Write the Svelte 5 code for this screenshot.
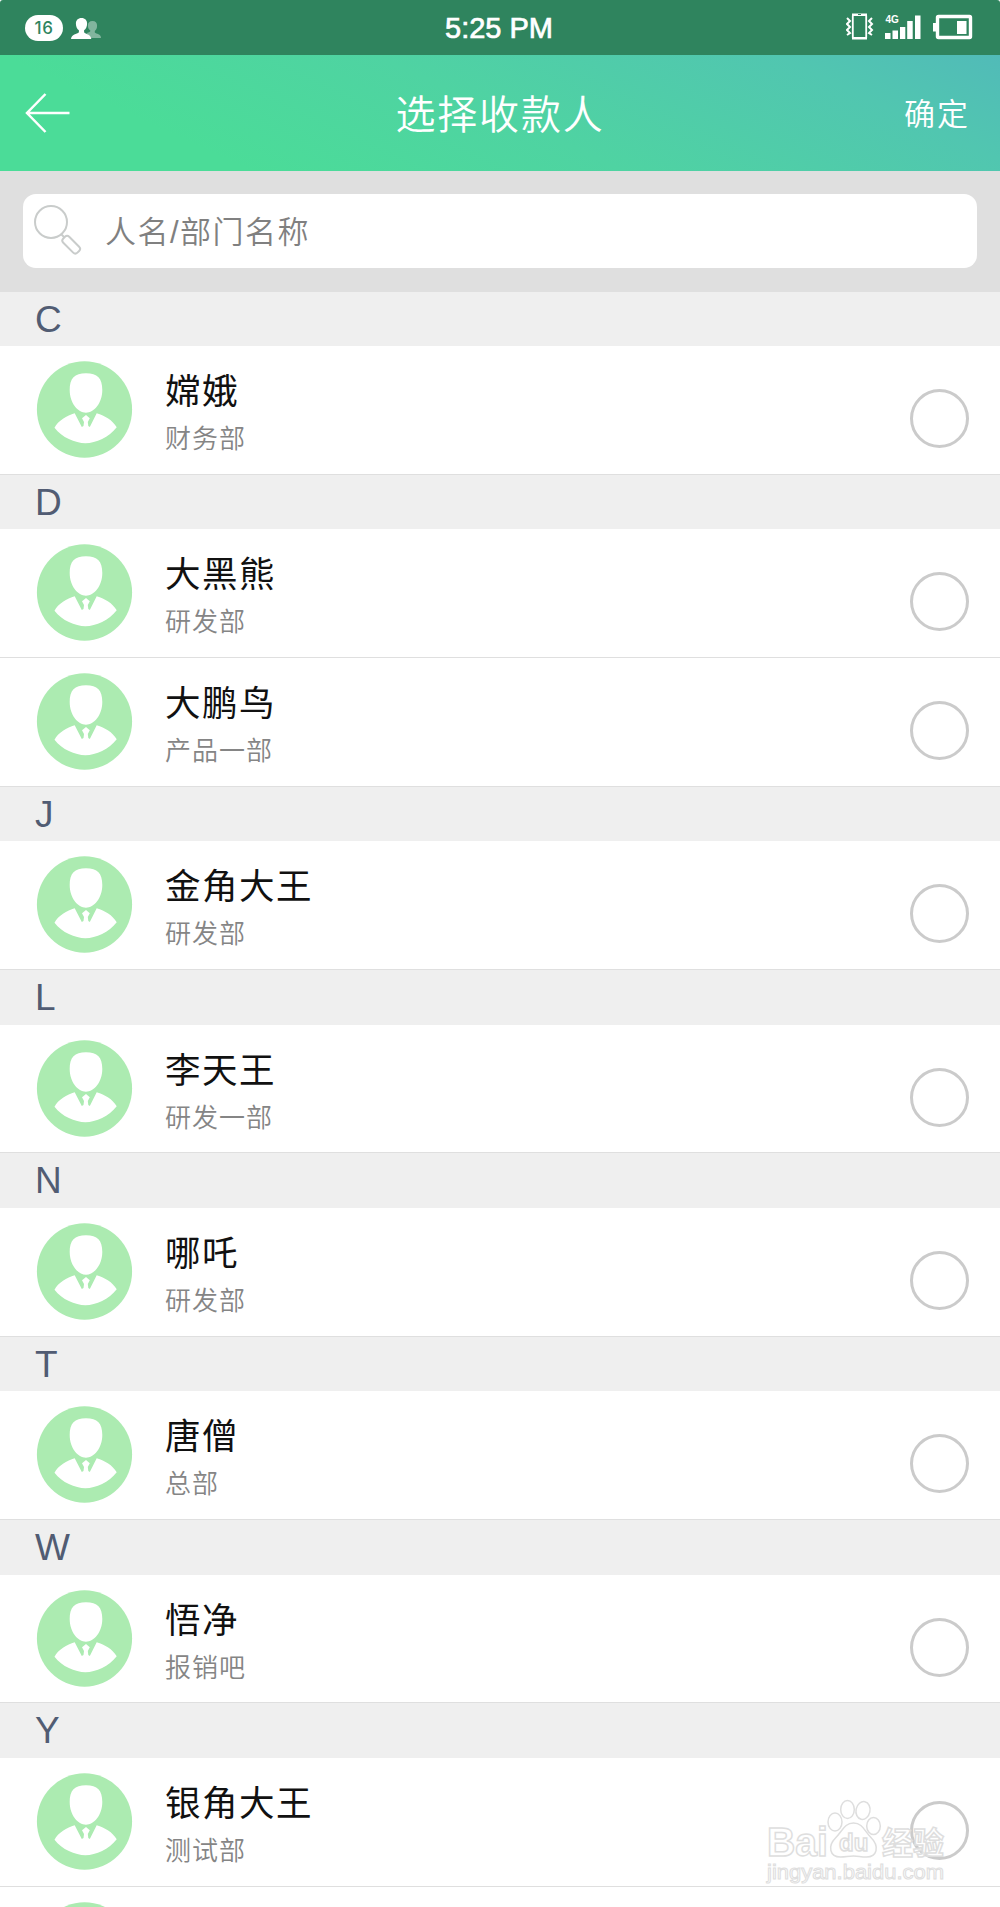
<script>
  const sections = [
    { letter: 'C', people: [{ name: '嫦娥', dept: '财务部' }] },
    {
      letter: 'D',
      people: [
        { name: '大黑熊', dept: '研发部' },
        { name: '大鹏鸟', dept: '产品一部' }
      ]
    },
    { letter: 'J', people: [{ name: '金角大王', dept: '研发部' }] },
    { letter: 'L', people: [{ name: '李天王', dept: '研发一部' }] },
    { letter: 'N', people: [{ name: '哪吒', dept: '研发部' }] },
    { letter: 'T', people: [{ name: '唐僧', dept: '总部' }] },
    { letter: 'W', people: [{ name: '悟净', dept: '报销吧' }] },
    { letter: 'Y', people: [{ name: '银角大王', dept: '测试部' }, { name: '', dept: '' }] }
  ];
</script>

<div class="screen">
  <div class="status">
    <div class="side">
      <span class="count">16</span>
      <svg class="contacts" width="31" height="22" viewBox="0 0 31 22">
        <path opacity="0.4" d="M21.500 3c3 0 4.600 2 4.600 4.800c0 2.500-1 4.200-2.300 5.200v1.600c1.500 1.500 6.200 1.400 6.200 5.400H20l-4.500-5c1.800-.6 3.400-1 3.800-1.800v-.8c-1.600-1-2.400-2.700-2.400-5C16.900 4.800 18.500 3 21.500 3z" />
        <path d="M10.500 0c3.600 0 5.600 2.300 5.600 5.700c0 3-1.300 5.300-3 6.500v2C14.500 16.300 20 16 20.300 21H0c.3-5 6-4.700 7.900-6.800v-2c-1.700-1.200-3-3.500-3-6.500C4.900 2.300 6.900 0 10.500 0z" />
      </svg>
    </div>
    <span class="time">5:25 PM</span>
    <svg class="system" width="128" height="30" viewBox="0 0 128 30">
      <g fill="none" stroke="#fff">
        <path stroke-width="2" d="M1 6l3 3-3 3 3 3-3 3 3 3-3 2M26 6l-3 3 3 3-3 3 3 3-3 3 3 2" />
        <path stroke-width="1.800" d="M6.800 3.500V26M20.200 3.500V26" />
        <path stroke-width="2.400" d="M6 2.800h15M6 26.200h15" />
        <rect x="91.500" y="4.500" width="33" height="21" rx="1" stroke-width="3.400" />
      </g>
      <path fill="#2f845e" d="M12 2h3v1h-3z" />
      <path fill="#fff" d="M39 21h5.500v6H39zM46.500 18.500H52V27h-5.500zM54 15h5.300v12H54zM61.200 9h5.500v18h-5.500zM69 3.500h5.500V27H69zM87 11h3v8.500h-3zM111 9h9.500v13H111z" />
      <text x="39.500" y="11" class="net">4G</text>
    </svg>
  </div>

  <header>
    <svg class="back" width="46" height="42" viewBox="0 0 46 42">
      <path d="M44.500 21H2M20.500 2L2 21 20.500 40" fill="none" stroke="#fff" stroke-width="2.500" />
    </svg>
    <h1>选择收款人</h1>
    <span class="confirm">确定</span>
  </header>

  <div class="search">
    <div class="field">
      <svg width="48" height="52" viewBox="0 0 48 52" fill="none" stroke="#c9cccb" stroke-width="2">
        <circle cx="17" cy="17" r="16" />
        <path d="M27.500 29.500l3 3" />
        <rect x="27.200" y="35.500" width="20" height="8.400" rx="3" transform="rotate(45 37.200 39.700)" />
      </svg>
      <span>人名/部门名称</span>
    </div>
  </div>

  <main>
    {#each sections as section}
      <h2>{section.letter}</h2>
      {#each section.people as person}
        <div class="row">
          <svg class="avatar" width="97" height="97" viewBox="0 0 97 97">
            <ellipse cx="48.500" cy="48.500" rx="47.600" ry="48.200" fill="#acebb1" />
            <g fill="#fff">
              <path d="M50 12.300c11.500 0 16.300 5 16.300 16.700C66.300 42 58 51.700 50 51.700S33.700 42 33.700 29c0-11.700 4.800-16.700 16.300-16.700z" />
              <path d="M38.700 52.200C31 54.500 22 59.500 18.500 66.800C26 76.500 39 82.200 49.500 82.200S73 76.500 80.700 66.300C76.500 59 69 54.800 60.700 52.200L53.800 66L52.300 65L51.800 61L53.800 57.300L50 54L46 57.300L48 61L47.500 65L45.800 66z" />
            </g>
          </svg>
          <div class="info">
            <strong>{person.name}</strong>
            <small>{person.dept}</small>
          </div>
          <i class="radio"></i>
        </div>
      {/each}
    {/each}
  </main>

  <svg class="watermark" width="190" height="90" viewBox="0 0 190 90">
    <g fill="#fff" fill-opacity="0.6" stroke="#dedede" stroke-width="1.500">
      <text x="3" y="57" class="brand" textLength="61" lengthAdjust="spacingAndGlyphs">Bai</text>
      <ellipse cx="71" cy="23" rx="7" ry="9" />
      <ellipse cx="83.500" cy="10.500" rx="6.800" ry="9" />
      <ellipse cx="99" cy="11.500" rx="7" ry="9" transform="rotate(12 99 11.500)" />
      <ellipse cx="109.500" cy="27" rx="6.800" ry="8.500" />
      <path d="M89.500 24c9 0 11 8 17 14 10 10 6 20-4 20-6 0-8-1-13-1s-8 1-13 1c-11 0-13-11-5-19 7-7 9-15 18-15z" />
      <text x="75" y="52" class="du">du</text>
      <text x="118" y="55" class="cjk">经验</text>
      <text x="3" y="80" class="url" textLength="177" lengthAdjust="spacingAndGlyphs">jingyan.baidu.com</text>
    </g>
  </svg>
</div>

<style>
  :global(body) {
    background: #fff;
  }
  .screen {
    position: relative;
    width: 1000px;
    height: 1907px;
    overflow: hidden;
    background: #fff;
    font-family: 'Liberation Sans', 'Noto Sans CJK SC', sans-serif;
  }
  .status {
    height: 55.400px;
    box-sizing: border-box;
    padding: 0 27px 0 25px;
    display: grid;
    grid-template-columns: 1fr auto 1fr;
    align-items: center;
    color: #fff;
    background: #2f845e;
    border-radius: 3px 3px 0 0;
  }
  .side {
    display: flex;
    align-items: center;
    gap: 8px;
  }
  .count {
    width: 38px;
    height: 26px;
    border-radius: 13px;
    background: #fff;
    color: #2f845e;
    font: 500 17px/26px Inter, sans-serif;
    letter-spacing: 0.500px;
    text-align: center;
  }
  .contacts {
    fill: #fff;
    margin-top: 2px;
  }
  .time {
    font-size: 29px;
    line-height: 54px;
    padding-top: 1px;
    -webkit-text-stroke: 0.700px #fff;
  }
  .system {
    justify-self: end;
    margin-right: -1px;
    margin-top: -1px;
  }
  .net {
    font: 700 10px 'Liberation Sans', sans-serif;
    fill: #fff;
  }
  header {
    height: 116px;
    box-sizing: border-box;
    padding: 0 30px 0 25px;
    display: grid;
    grid-template-columns: 1fr auto 1fr;
    align-items: center;
    color: #fff;
    background: linear-gradient(25deg, #4bdc98 20%, #4fd3a2 50%, #51c6b0 82%, #51bbb8);
  }
  h1 {
    margin: 0;
    padding: 0 0 3px 5px;
    font-family: 'Noto Sans CJK SC', sans-serif;
    font-size: 40px;
    font-weight: 350;
    letter-spacing: 1.800px;
    line-height: 60px;
  }
  .confirm {
    justify-self: end;
    margin-top: -3px;
    font-size: 31px;
    letter-spacing: 2px;
    font-weight: 350;
  }
  .search {
    height: 120.200px;
    box-sizing: border-box;
    padding: 23px;
    background: #dfdfdf;
  }
  .field {
    height: 74px;
    display: flex;
    align-items: center;
    gap: 23px;
    padding-left: 11px;
    border-radius: 13px;
    background: #fff;
    color: #808080;
    font-size: 31px;
    font-weight: 350;
    letter-spacing: 1.500px;
  }
  .field span {
    margin-top: -4px;
  }
  h2 {
    height: 54.600px;
    margin: 0;
    padding-left: 35px;
    background: #efefef;
    color: #515c73;
    font-size: 37px;
    font-weight: 400;
    line-height: 55px;
  }
  .row {
    height: 128.700px;
    box-sizing: border-box;
    display: flex;
    align-items: flex-start;
    padding: 15px 31px 0 36px;
    border-bottom: 1px solid #dfdfdf;
  }
  .info {
    flex: 1;
    display: flex;
    flex-direction: column;
    padding: 4px 0 0 32px;
  }
  strong {
    height: 50px;
    color: #111;
    font-size: 35.500px;
    font-weight: 400;
    letter-spacing: 1.500px;
    line-height: 54px;
  }
  small {
    color: #858585;
    font-size: 26px;
    font-weight: 350;
    letter-spacing: 1px;
    line-height: 48px;
  }
  .radio {
    width: 59px;
    height: 59px;
    box-sizing: border-box;
    margin-top: 28px;
    border: 3px solid #cbcbcb;
    border-radius: 50%;
  }
  .watermark {
    position: absolute;
    left: 764px;
    top: 1799px;
  }
  .brand {
    font: 700 40px 'Liberation Sans', sans-serif;
  }
  .du {
    font: 700 24px 'Liberation Sans', sans-serif;
  }
  .cjk {
    font: 700 31px 'Noto Sans CJK SC', sans-serif;
  }
  .url {
    font: 400 20px 'Liberation Sans', sans-serif;
    stroke-width: 1px;
  }
</style>
